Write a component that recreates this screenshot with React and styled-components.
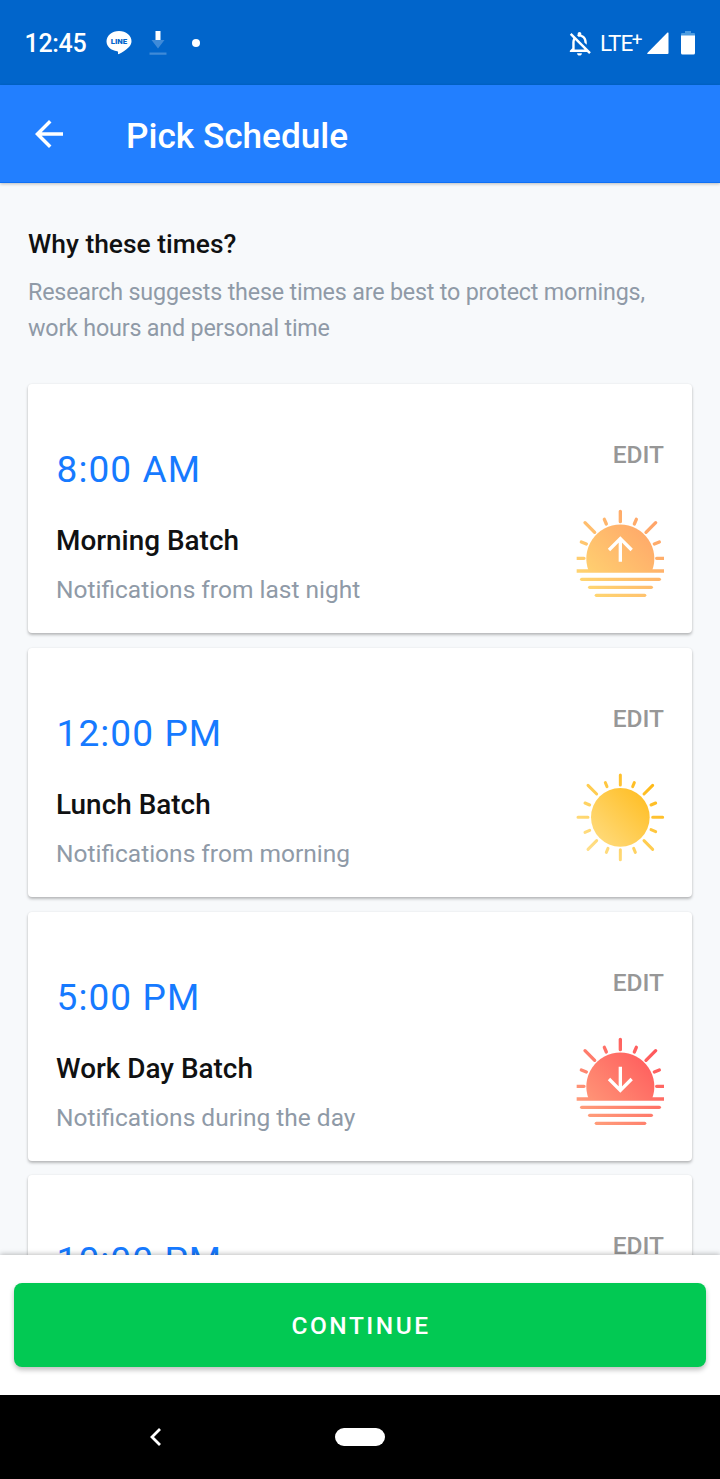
import styled, { createGlobalStyle } from 'styled-components'
import { MdArrowBack, MdOutlineNotificationsOff } from 'react-icons/md'

const GlobalStyle = createGlobalStyle`
  * {
    box-sizing: border-box;
  }
  body {
    margin: 0;
    background: #000;
    font-family: Roboto, 'Liberation Sans', sans-serif;
  }
`

const Screen = styled.div`
  width: 720px;
  height: 1479px;
  display: flex;
  flex-direction: column;
  overflow: hidden;
  background: #f7f9fb;
`

const StatusBar = styled.div`
  height: 85px;
  flex: none;
  display: flex;
  align-items: center;
  padding: 1px 25px 0;
  background: #0165cb;
  color: #fff;
  svg {
    display: block;
    flex: none;
  }
`

const Clock = styled.span`
  width: 81px;
  padding-top: 2px;
  font-size: 25px;
  font-weight: 500;
  line-height: 30px;
  letter-spacing: -0.3px;
  text-indent: -0.5px;
`

const StatusIcons = styled.div`
  display: flex;
  align-items: center;
  margin-left: ${(props) => (props.$end ? 'auto' : '0')};
`

const Network = styled.span`
  display: flex;
  width: 47px;
  font-size: 22.5px;
  line-height: 28px;
  letter-spacing: -1px;
  sup {
    margin-left: -0.5px;
    font-size: 19px;
    line-height: 21px;
  }
`

const AppBar = styled.header`
  height: 98px;
  flex: none;
  display: flex;
  align-items: center;
  gap: 56px;
  padding: 1px 28px 0;
  background: #227fff;
  box-shadow: 0 1px 3px rgba(0, 0, 0, 0.25);
  border-bottom: 1px solid #0f70f5;
  color: #fff;
  z-index: 1;
`

const BackButton = styled.button`
  display: flex;
  padding: 0;
  border: 0;
  background: none;
  color: inherit;
  font-size: 42px;
`

const Title = styled.h1`
  margin: 0;
  padding-top: 3px;
  font-size: 35.2px;
  font-weight: 500;
  line-height: 42px;
`

const Content = styled.main`
  flex: 1;
  min-height: 0;
  overflow: hidden;
  padding: 43px 28px 0;
`

const Question = styled.h2`
  margin: 0 0 12px;
  font-size: 26.4px;
  font-weight: 500;
  line-height: 36px;
  color: #101112;
`

const Answer = styled.p`
  margin: 0 0 38px;
  font-size: 23.3px;
  line-height: 36px;
  letter-spacing: -0.19px;
  color: #8f9aa7;
`

const Cards = styled.div`
  display: flex;
  flex-direction: column;
  gap: 14.4px;
`

const Card = styled.section`
  height: 249.4px;
  flex: none;
  display: flex;
  justify-content: space-between;
  padding: 56px 28px 0;
  border-radius: 4px;
  background: #fff;
  box-shadow: 0 2px 3px rgba(0, 0, 0, 0.25), 0 0 2px rgba(0, 0, 0, 0.08);
`

const Time = styled.div`
  margin: 2px 0 27px;
  font-size: 37px;
  line-height: 56px;
  letter-spacing: 1.1px;
  text-indent: 0.5px;
  color: #167aff;
`

const BatchName = styled.div`
  margin-bottom: 16px;
  font-size: 27.9px;
  font-weight: 500;
  line-height: 32px;
  color: #101112;
`

const BatchInfo = styled.div`
  font-size: 24.5px;
  line-height: 34px;
  color: #8f9aa7;
`

const Side = styled.div`
  display: flex;
  flex-direction: column;
  align-items: flex-end;
  svg {
    display: block;
    margin: 39px -1px 0 0;
  }
`

const EditButton = styled.button`
  padding: 0;
  border: 0;
  background: none;
  font-family: inherit;
  font-size: 24.5px;
  font-weight: 500;
  line-height: 29px;
  color: #979797;
`

const Footer = styled.footer`
  height: 140px;
  flex: none;
  padding: 28px 14px;
  background: #fff;
  box-shadow: 0 -1px 5px rgba(0, 0, 0, 0.25);
  z-index: 1;
`

const ContinueButton = styled.button`
  display: block;
  width: 100%;
  height: 84px;
  padding: 1px 0 0 2px;
  border: 0;
  border-radius: 8px;
  background: #02c953;
  box-shadow: 0 3px 5px rgba(0, 0, 0, 0.25);
  color: #fff;
  font-family: inherit;
  font-size: 24.5px;
  font-weight: 500;
  letter-spacing: 2.5px;
`

const NavBar = styled.nav`
  height: 84px;
  flex: none;
  display: grid;
  grid-template-columns: 310px 100px 310px;
  place-items: center;
  background: #000;
  z-index: 2;
`

const HomePill = styled.span`
  width: 50px;
  height: 18px;
  border-radius: 9px;
  background: #fff;
`

const LineIcon = () => (
  <svg width='26' height='26' viewBox='0 0 26 26'>
    <path
      d='M13 1C6 1 .5 5.600 .5 11.200c0 5.200 4.600 9.300 10.700 10 1 .2 1 .8.8 2.300-.1.700.4.900 1 .6 3-1.600 7.500-4.200 10-7.100 1.600-1.700 2.500-3.600 2.500-5.800C25.500 5.600 20 1 13 1z'
      fill='#fff'
    />
    <text x='13' y='14' textAnchor='middle' fontSize='7.8' fontWeight='900' fill='#0165cb'>
      LINE
    </text>
  </svg>
)

const DownloadIcon = () => (
  <svg width='18' height='26' viewBox='0 0 18 26'>
    <path d='M6.500 1h5v9h-5z' fill='#fff' />
    <path d='M2.500 10h13L9 18.500zM.5 22.500h17V24.700H.5z' fill='#3f8ad8' />
  </svg>
)

const SignalIcon = () => (
  <svg width='22' height='22' viewBox='0 0 22 22'>
    <path d='M.8 22Q-.2 22 .6 20.800L20.500.6Q21.500 0 21.500 1v20q0 1-1 1z' fill='#fff' />
  </svg>
)

const BatteryIcon = () => (
  <svg width='14' height='24' viewBox='0 0 14 24'>
    <path d='M4 0h6v2h3q1 0 1 1v2H0V3q0-1 1-1h3z' fill='#4c9be0' />
    <path d='M0 4.500h14V22q0 1.500-1.500 1.500h-11Q0 23.500 0 22z' fill='#fff' />
  </svg>
)

const colors = {
  sunrise: ['#ffd571', '#ff9f68'],
  noon: ['#ffe08c', '#ffb60c'],
  sunset: ['#ff9c7a', '#ff5158'],
}

const horizonRays =
  'M0-126V-95M-48-102l6 14M48-102l-6 14M-106-92l29 29M106-92L77-63M-117-34l15 6M117-34l-15 6'
const noonRays =
  'M0-127v30M0 97v30M-127 0h30M97 0h30M-97-96l26 26M97-96L71-70M-97 96l26-26M97 96L71 70M-45-104l5 12M42-104l-5 12M-106-43l14 6M106-43l-14 6M-106 45l14-6M106 43l-14-6M-42 105l5-12M45 105l-5-12'
const arrows = {
  sunrise: 'M0 25V-43M-34-10L0-44 34-10',
  sunset: 'M0-44V27M-34-7L0 27 34-7',
}

const SunIcon = ({ type }) => {
  const paint = `url(#${type})`
  return (
    <svg width='90' height='90' viewBox='-136 -136 270 270' fill='none'>
      <defs>
        <linearGradient
          id={type}
          gradientUnits='userSpaceOnUse'
          x1='-100'
          y1='100'
          x2='115'
          y2='-115'
        >
          <stop stopColor={colors[type][0]} />
          <stop offset='1' stopColor={colors[type][1]} />
        </linearGradient>
      </defs>
      {type === 'noon' ? (
        <>
          <circle r='88' fill={paint} />
          <path d={noonRays} stroke={paint} strokeWidth='9' strokeLinecap='round' />
        </>
      ) : (
        <>
          <path d='M-95 53A102 102 0 1 1 95 53z' fill={paint} />
          <path d={horizonRays} stroke={paint} strokeWidth='10' strokeLinecap='round' />
          {/* horizon line and the two side rays */}
          <path d='M-131 48h262v10h-262zM-131 10h22q5 0 5 5t-5 5h-22zM131 10h-22q-5 0-5 5t5 5h22z' fill={paint} />
          <rect x='-121' y='73' width='243' height='10' rx='5' fill={paint} />
          <rect x='-97' y='97' width='195' height='10' rx='5' fill={paint} />
          <rect x='-77' y='121' width='155' height='10' rx='5' fill={paint} />
          <path d={arrows[type]} stroke='#fff' strokeWidth='10' />
        </>
      )}
    </svg>
  )
}

const batches = [
  { time: '8:00 AM', name: 'Morning Batch', info: 'Notifications from last night', type: 'sunrise' },
  { time: '12:00 PM', name: 'Lunch Batch', info: 'Notifications from morning', type: 'noon' },
  { time: '5:00 PM', name: 'Work Day Batch', info: 'Notifications during the day', type: 'sunset' },
  { time: '10:00 PM' },
]

const BatchCard = ({ time, name, info, type }) => (
  <Card>
    <div>
      <Time>{time}</Time>
      {name && <BatchName>{name}</BatchName>}
      {info && <BatchInfo>{info}</BatchInfo>}
    </div>
    <Side>
      <EditButton>EDIT</EditButton>
      {type && <SunIcon type={type} />}
    </Side>
  </Card>
)

const Gap = styled.span`
  width: ${(props) => props.$w}px;
`

const Dot = styled.span`
  width: 8px;
  height: 8px;
  border-radius: 50%;
  background: #fff;
`

export default function App() {
  return (
    <Screen>
      <GlobalStyle />
      <StatusBar>
        <Clock>12:45</Clock>
        <StatusIcons>
          <LineIcon />
          <Gap $w={17} />
          <DownloadIcon />
          <Gap $w={25} />
          <Dot />
        </StatusIcons>
        <StatusIcons $end>
          <MdOutlineNotificationsOff size={29} />
          <Gap $w={6} />
          <Network>
            LTE<sup>+</sup>
          </Network>
          <SignalIcon />
          <Gap $w={12} />
          <BatteryIcon />
        </StatusIcons>
      </StatusBar>
      <AppBar>
        <BackButton>
          <MdArrowBack />
        </BackButton>
        <Title>Pick Schedule</Title>
      </AppBar>
      <Content>
        <Question>Why these times?</Question>
        <Answer>
          Research suggests these times are best to protect mornings,
          <br />
          work hours and personal time
        </Answer>
        <Cards>
          {batches.map((batch) => (
            <BatchCard key={batch.time} {...batch} />
          ))}
        </Cards>
      </Content>
      <Footer>
        <ContinueButton>CONTINUE</ContinueButton>
      </Footer>
      <NavBar>
        <svg width='14' height='20' viewBox='0 0 14 20' fill='none'>
          <path d='M12 2L4 10l8 8' stroke='#fff' strokeWidth='2.800' />
        </svg>
        <HomePill />
      </NavBar>
    </Screen>
  )
}
